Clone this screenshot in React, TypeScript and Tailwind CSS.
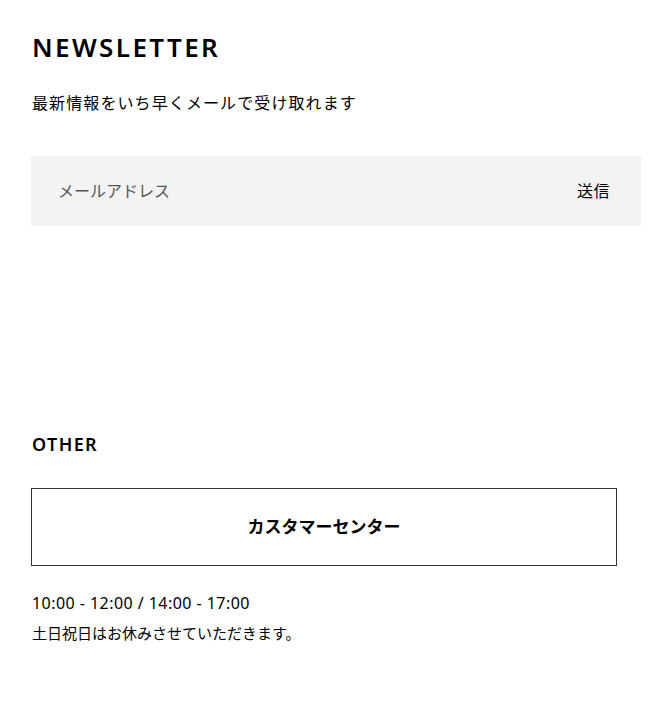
export default function App() {
  const font = { fontFamily: '"Noto Sans", "Noto Sans CJK JP", sans-serif' };
  return (
    <div className="min-h-screen bg-white text-black" style={font}>
      <div className="pl-[32px] pr-[30px] pt-[30px]">
        <section>
          <h2 className="text-[26px] font-semibold leading-[34px] tracking-[2.4px]">NEWSLETTER</h2>
          <p className="mt-[27px] text-[16px] leading-[24px] tracking-[1.1px]">
            最新情報をいち早くメールで受け取れます
          </p>
          <form className="-ml-px mt-[41px] flex h-[70px] items-center bg-[#f3f3f3] pl-[27px] pr-[31px]">
            <input
              type="email"
              placeholder="メールアドレス"
              className="flex-1 bg-transparent text-[16px] text-[#333] outline-none placeholder:text-[#555]"
            />
            <button type="button" className="text-[16px] tracking-[0.5px]">
              送信
            </button>
          </form>
        </section>

        <section className="mt-[205px]">
          <h3 className="text-[18px] font-semibold leading-[26px] tracking-[1.4px]">OTHER</h3>
          <a
            href="#"
            className="-ml-px mt-[31px] mr-[24px] flex h-[78px] items-center justify-center border border-[#333] text-[17px] font-bold"
          >
            カスタマーセンター
          </a>
          <p className="mt-[25px] text-[16px] leading-[24px] tracking-[0.45px]">10:00 - 12:00 / 14:00 - 17:00</p>
          <p className="mt-[7px] text-[15px] leading-[22px]">土日祝日はお休みさせていただきます。</p>
        </section>
      </div>
    </div>
  );
}
